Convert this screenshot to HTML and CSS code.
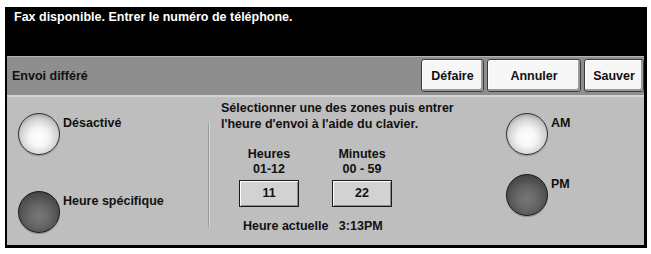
FILE: index.html
```html
<!DOCTYPE html>
<html lang="fr">
<head>
    <meta charset="UTF-8">
    <title>Envoi différé</title>
    <link rel="stylesheet" href="styles.css">
</head>
<body>
    <div class="screen">
        <div class="message">Fax disponible. Entrer le numéro de téléphone.</div>

        <div class="titlebar">
            <span class="title">Envoi différé</span>
            <div class="actions">
                <button class="btn btn-undo">Défaire</button>
                <button class="btn btn-cancel">Annuler</button>
                <button class="btn btn-save">Sauver</button>
            </div>
        </div>

        <div class="content">
            <div class="col-left">
                <div class="option">
                    <span class="radio light"></span>
                    <span class="option-label">Désactivé</span>
                </div>
                <div class="option">
                    <span class="radio dark"></span>
                    <span class="option-label">Heure spécifique</span>
                </div>
            </div>

            <div class="divider"></div>

            <div class="col-middle">
                <p class="hint">Sélectionner une des zones puis entrer<br>l'heure d'envoi à l'aide du clavier.</p>
                <div class="fields">
                    <div class="field">
                        <div class="field-name">Heures</div>
                        <div class="field-range">01-12</div>
                        <div class="field-box">11</div>
                    </div>
                    <div class="field">
                        <div class="field-name">Minutes</div>
                        <div class="field-range">00 - 59</div>
                        <div class="field-box">22</div>
                    </div>
                </div>
                <div class="current">Heure actuelle&nbsp;&nbsp;&nbsp;3:13PM</div>
            </div>

            <div class="col-right">
                <div class="option">
                    <span class="radio light"></span>
                    <span class="option-label">AM</span>
                </div>
                <div class="option">
                    <span class="radio dark"></span>
                    <span class="option-label">PM</span>
                </div>
            </div>
        </div>
    </div>
</body>
</html>
```

FILE: styles.css
```css
body {
    margin: 0;
    background: #fff;
    font-family: 'Liberation Sans', Arial, sans-serif;
    font-weight: bold;
    font-size: 12.5px;
    color: #111;
}
.screen {
    margin: 7px 0 0 5px;
    width: 637px;
    padding: 0 3px 3px 2px;
    background: #000;
}
.message {
    height: 46px;
    padding: 3px 0 0 7px;
    color: #fff;
    line-height: 15px;
}
.titlebar {
    display: flex;
    align-items: center;
    justify-content: space-between;
    height: 38px;
    border-top: 1px solid #b4b4b4;
    border-bottom: 2px solid #d4d4d4;
    background: #8e8e8e;
}
.title {
    padding-left: 5px;
    color: #111;
}
.actions {
    display: flex;
    gap: 3px;
    align-self: flex-start;
    padding-top: 2px;
}
.btn {
    height: 33px;
    padding: 0;
    border: 1px solid #3a3a3a;
    border-radius: 3px;
    background: #f7f7f7;
    box-shadow: inset -2px -2px 0 #9a9a9a, inset 1px 1px 0 #fff;
    font-family: inherit;
    font-weight: bold;
    font-size: 12.5px;
    color: #111;
}
.btn-undo { width: 63px; }
.btn-cancel { width: 94px; }
.btn-save { width: 60px; }
.content {
    display: flex;
    height: 148px;
    background: #bebebe;
}
.col-left {
    display: flex;
    flex-direction: column;
    gap: 36px;
    width: 190px;
    padding: 16px 0 0 11px;
}
.option {
    display: flex;
    align-items: flex-start;
    gap: 3px;
}
.option-label {
    padding-top: 3px;
}
.radio {
    flex: none;
    width: 40px;
    height: 40px;
    border: 1px solid #333;
    border-radius: 50%;
    box-shadow: 0 1px 1px rgba(0,0,0,0.25);
}
.radio.light {
    background: radial-gradient(circle at 50% 58%, #fff 0%, #f6f6f6 30%, #cfcfcf 62%, #8a8a8a 85%, #6a6a6a 100%);
}
.radio.dark {
    border-color: #1a1a1a;
    background: radial-gradient(circle at 50% 60%, #777 0%, #666 35%, #4a4a4a 70%, #222 100%);
}
.divider {
    align-self: flex-start;
    width: 1px;
    height: 104px;
    margin-top: 26px;
    background: #9a9a9a;
    border-right: 1px solid #d8d8d8;
}
.col-middle {
    width: 285px;
    padding: 3px 0 0 11px;
}
.hint {
    margin: 0;
    line-height: 16px;
}
.fields {
    display: flex;
    gap: 33px;
    margin: 15px 0 0 18px;
}
.field {
    width: 60px;
    text-align: center;
    line-height: 15px;
}
.field-range {
    font-weight: normal;
    font-weight: bold;
}
.field-box {
    height: 25px;
    margin-top: 3px;
    border: 1px solid #1a1a1a;
    background: #d2d2d2;
    box-shadow: inset 1px 1px 0 #fff, inset -1px -1px 0 #8a8a8a;
    line-height: 25px;
}
.current {
    margin: 12px 0 0 22px;
}
.col-right {
    display: flex;
    flex-direction: column;
    gap: 19px;
    padding: 16px 0 0 0;
}
```
